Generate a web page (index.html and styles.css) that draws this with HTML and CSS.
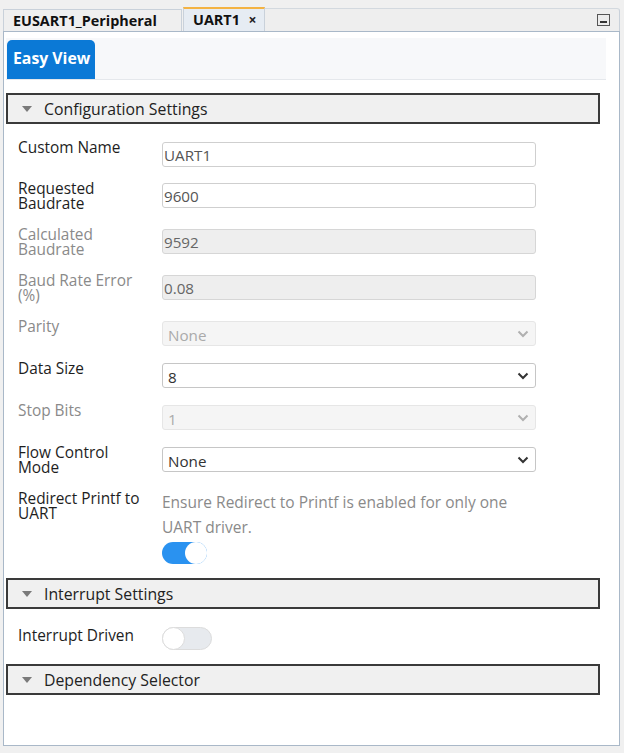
FILE: index.html
```html
<!DOCTYPE html>
<html>
<head>
<meta charset="utf-8">
<link rel="stylesheet" href="styles.css">
</head>
<body>
<div class="window">
  <div class="tabbar">
    <div class="tab">EUSART1_Peripheral</div>
    <div class="tab active">UART1 <span class="close">×</span></div>
    <div class="tabfill">
      <svg class="minimize" width="13" height="12" viewBox="0 0 13 12">
        <rect x="0.5" y="0.5" width="12" height="11" fill="#ececec" stroke="#555" stroke-width="1"/>
        <rect x="3" y="7" width="7" height="2" fill="#333"/>
      </svg>
    </div>
  </div>
  <div class="panel">
    <div class="toolbar">
      <div class="viewbtn">Easy View</div>
    </div>

    <div class="section">
      <span class="tri"></span>Configuration Settings
    </div>
    <div class="form">
      <div class="row">
        <div class="label">Custom Name</div>
        <div class="field first"><div class="input text">UART1</div></div>
      </div>
      <div class="row">
        <div class="label">Requested Baudrate</div>
        <div class="field"><div class="input text">9600</div></div>
      </div>
      <div class="row">
        <div class="label dis">Calculated Baudrate</div>
        <div class="field"><div class="input text ro">9592</div></div>
      </div>
      <div class="row">
        <div class="label dis">Baud Rate Error (%)</div>
        <div class="field"><div class="input text ro">0.08</div></div>
      </div>
      <div class="row">
        <div class="label dis">Parity</div>
        <div class="field"><div class="input select disabled">None<svg class="chev" width="12" height="8" viewBox="0 0 12 8"><path d="M1.5 1.5 L6 6 L10.5 1.5" fill="none" stroke="#b0b0b0" stroke-width="2"/></svg></div></div>
      </div>
      <div class="row">
        <div class="label">Data Size</div>
        <div class="field"><div class="input select">8<svg class="chev" width="12" height="8" viewBox="0 0 12 8"><path d="M1.5 1.5 L6 6 L10.5 1.5" fill="none" stroke="#333" stroke-width="2"/></svg></div></div>
      </div>
      <div class="row">
        <div class="label dis">Stop Bits</div>
        <div class="field"><div class="input select disabled">1<svg class="chev" width="12" height="8" viewBox="0 0 12 8"><path d="M1.5 1.5 L6 6 L10.5 1.5" fill="none" stroke="#b0b0b0" stroke-width="2"/></svg></div></div>
      </div>
      <div class="row">
        <div class="label">Flow Control Mode</div>
        <div class="field"><div class="input select">None<svg class="chev" width="12" height="8" viewBox="0 0 12 8"><path d="M1.5 1.5 L6 6 L10.5 1.5" fill="none" stroke="#333" stroke-width="2"/></svg></div></div>
      </div>
      <div class="row last">
        <div class="label">Redirect Printf to UART</div>
        <div class="field">
          <div class="desc">Ensure Redirect to Printf is enabled for only one UART driver.</div>
          <div class="toggle on"><span class="knob"></span></div>
        </div>
      </div>
    </div>

    <div class="section">
      <span class="tri"></span>Interrupt Settings
    </div>
    <div class="form">
      <div class="row last">
        <div class="label lower">Interrupt Driven</div>
        <div class="field"><div class="toggle off"><span class="knob"></span></div></div>
      </div>
    </div>

    <div class="section">
      <span class="tri"></span>Dependency Selector
    </div>
  </div>
</div>
</body>
</html>
```

FILE: styles.css
```css
html, body {
  margin: 0;
  padding: 0;
  background: #f0f0f0;
  font-family: "Open Sans", "Noto Sans", "DejaVu Sans", sans-serif;
}

.window {
  padding: 7px 4px 0 3px;
  height: 746px;
  box-sizing: border-box;
  display: flex;
  flex-direction: column;
}

.tabbar {
  display: flex;
  align-items: flex-end;
  height: 24px;
}

.tab {
  height: 22px;
  box-sizing: border-box;
  padding: 0 0 0 9px;
  width: 179px;
  background: #efefef;
  border: 1px solid #c9d1da;
  border-bottom: none;
  font-weight: 700;
  font-size: 14.4px;
  line-height: 21px;
  color: #111;
  white-space: nowrap;
}

.tab.active {
  height: 24px;
  width: 82px;
  padding-left: 9px;
  background: #e6ecf3;
  border-top: 2px solid #f4b343;
  border-left: 1px solid #c9d1da;
  margin-left: 1px;
  line-height: 21px;
}

.close {
  font-size: 14px;
  font-weight: 700;
  margin-left: 5px;
  color: #222;
}

.tabfill {
  flex: 1;
  height: 23px;
  box-sizing: border-box;
  background: #eeeeee;
  border-top: 1px solid #d3d9df;
  border-right: 1px solid #c9d1da;
  border-top-right-radius: 3px;
  display: flex;
  justify-content: flex-end;
  align-items: center;
  padding-right: 9px;
}

.minimize {
  display: block;
  margin-top: -1px;
}

.panel {
  flex: 1;
  background: #fff;
  border: 1px solid #a9b8c8;
  padding: 6px 13px 0 2px;
}

.toolbar {
  height: 42px;
  box-sizing: border-box;
  background: #f7f8fa;
  border-bottom: 1px solid #e5e8ec;
  padding: 2px 0 0 1px;
  display: flex;
}

.viewbtn {
  width: 88px;
  height: 39px;
  box-sizing: border-box;
  background: #0b79d6;
  border-radius: 5px 5px 0 0;
  color: #fff;
  font-weight: 700;
  font-size: 15.8px;
  line-height: 37px;
  padding-left: 6px;
  white-space: nowrap;
}

.section {
  margin: 13px 6px 0 0;
  height: 31px;
  box-sizing: border-box;
  background: #f0f0f0;
  border: 2px solid #3a3a3a;
  display: flex;
  align-items: center;
  font-size: 15.8px;
  color: #222;
  padding-left: 14px;
}

.form + .section {
  margin-top: 0;
}

.tri {
  width: 0;
  height: 0;
  border-left: 5px solid transparent;
  border-right: 5px solid transparent;
  border-top: 6px solid #7a7a7a;
  margin-right: 12px;
  margin-top: 1px;
}

.form {
  padding: 18px 0 0 12px;
}

.row {
  display: grid;
  grid-template-columns: 144px 374px;
  align-items: start;
}

.label {
  font-size: 15.4px;
  line-height: 15px;
  color: #1e1e1e;
  margin: -2px 0 18px;
  padding-right: 12px;
}

.label.dis {
  color: #8a8a8a;
}

.label.lower {
  margin-top: 1px;
}

.field {
  margin-bottom: 17px;
}

.field.first {
  margin-bottom: 16px;
}

.row.last .field {
  margin-bottom: 14px;
}

.row.last .label {
  margin-bottom: 0;
}

.input {
  height: 25px;
  box-sizing: border-box;
  border: 1px solid #cfcfcf;
  border-radius: 3px;
  background: #fff;
  font-size: 15.2px;
  line-height: 24px;
  padding-left: 1px;
  color: #555;
  position: relative;
}

.input.ro {
  background: #eeeeee;
  border-color: #d6d6d6;
  color: #666;
}

.input.select {
  border-color: #c6c6c6;
  color: #333;
  line-height: 26px;
  padding-left: 5px;
}

.input.select.disabled {
  background: #f5f5f5;
  border-color: #e6e6e6;
  color: #aaa;
}

.chev {
  position: absolute;
  right: 6px;
  top: 8px;
}

.desc {
  font-size: 15.5px;
  line-height: 25px;
  color: #8a8a8a;
  margin-top: -3px;
}

.toggle {
  position: relative;
  border-radius: 12px;
  margin-top: 2px;
}

.toggle.on {
  width: 45px;
  height: 22px;
  background: #2a92f0;
}

.toggle.on .knob {
  position: absolute;
  right: 0;
  top: 0;
  width: 22px;
  height: 22px;
  border-radius: 50%;
  background: #fff;
}

.toggle.off {
  width: 50px;
  height: 23px;
  box-sizing: border-box;
  background: #e7eaee;
  border: 1px solid #dcdcdc;
  margin-top: 0;
}

.toggle.off .knob {
  position: absolute;
  left: -1px;
  top: -1px;
  width: 23px;
  height: 23px;
  box-sizing: border-box;
  border-radius: 50%;
  background: #fff;
  border: 1px solid #dcdcdc;
}
```
